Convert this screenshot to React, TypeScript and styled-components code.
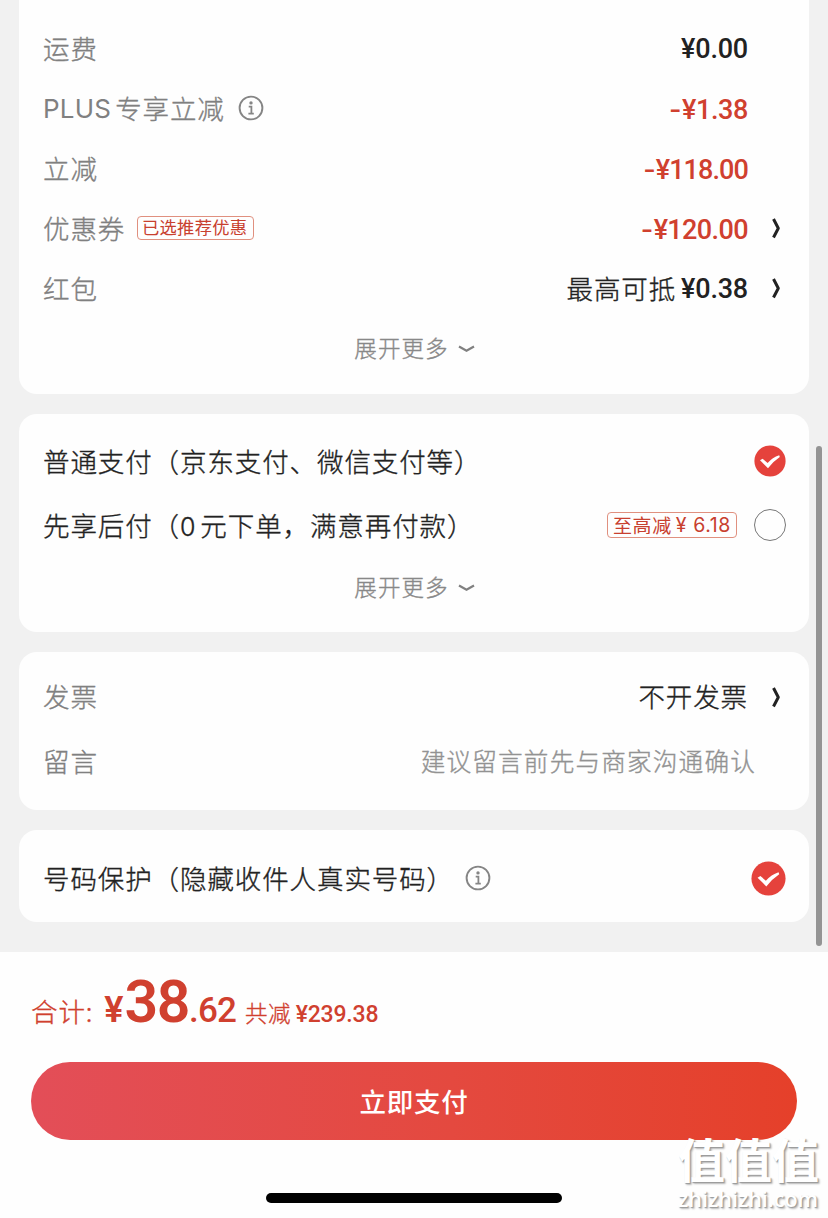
import React from 'react';
import styled, {createGlobalStyle, css} from 'styled-components';

const GlobalStyle = createGlobalStyle`
    * {
        box-sizing: border-box;
    }
    body {
        margin: 0;
        background: #fefefe;
        font-family: "Noto Sans CJK SC", sans-serif;
        font-weight: 300;
        color: #222;
    }
`;

const Page = styled.div`
    position: relative;
    width: 828px;
    height: 1218px;
    overflow: hidden;
    display: flex;
    flex-direction: column;
`;

const Content = styled.main`
    height: 952px;
    padding: 0 19px;
    background: #f1f1f1;
    display: flex;
    flex-direction: column;
    gap: 20px;
`;

const Card = styled.section<{$height: number; $top: number; $flat?: boolean}>`
    height: ${p => p.$height}px;
    padding: ${p => p.$top}px 23px 0 24px;
    background: #fefefe;
    border-radius: ${p => p.$flat ? '0 0 18px 18px' : '18px'};
`;

const Row = styled.div<{$height?: number}>`
    height: ${p => p.$height || 60}px;
    display: flex;
    align-items: center;
    font-size: 26.5px;
    letter-spacing: 0.9px;
    white-space: nowrap;
`;

const Text = styled.span`
    padding-bottom: 2px;
    -webkit-text-stroke: 0.35px currentColor;
`;

const Label = styled.span<{$muted?: boolean}>`
    color: ${p => p.$muted ? '#808080' : '#222'};
    flex: 1;
    display: flex;
    align-items: center;
`;

const Latin = styled.span`
    font-family: Inter, sans-serif;
    font-weight: 400;
    font-size: 26px;
    letter-spacing: 0.2px;
    margin-right: 4px;
`;

const Zero = styled.span`
    font-family: Inter, sans-serif;
    font-size: 25px;
    margin-right: 4px;
`;

const Note = styled(Text)`
    margin-right: 5px;
`;

const Price = styled.span<{$red?: boolean; $spacing?: number}>`
    font-family: Roboto, sans-serif;
    font-weight: 500;
    font-size: 27px;
    letter-spacing: ${p => p.$spacing || -0.2}px;
    padding-top: 2px;
    color: ${p => p.$red ? '#d0402f' : '#222'};
`;

const Minus = styled.span`
    font-family: Inter, sans-serif;
    font-size: 27px;
    margin-right: 1px;
`;

const Arrow = styled.span`
    width: 38px;
    display: flex;
    justify-content: center;
    padding-left: 18px;
`;

const tagBase = css`
    display: inline-flex;
    align-items: center;
    justify-content: center;
    border: 1px solid #e0907f;
    border-radius: 4px;
    color: #c8402f;
    font-weight: 400;
`;

const CouponTag = styled.span`
    ${tagBase};
    width: 117px;
    height: 24px;
    margin-left: 12px;
    padding: 0 2px 3px 0;
    font-size: 17.3px;
    letter-spacing: 0.3px;
`;

const DiscountTag = styled.span`
    ${tagBase};
    width: 130px;
    height: 26px;
    margin-right: 17px;
    padding-bottom: 2px;
    font-size: 19px;
    letter-spacing: 0.6px;
    span {
        font-family: Inter, sans-serif;
        font-size: 19.5px;
        margin-left: 4px;
        padding-top: 2px;
    }
`;

const Hint = styled(Text)`
    font-size: 24.6px;
    letter-spacing: 1.2px;
    color: #929292;
    margin-right: 30px;
    padding-bottom: 3px;
`;

const More = styled.div`
    height: 60px;
    display: flex;
    align-items: center;
    justify-content: center;
    gap: 9px;
    font-size: 22.5px;
    letter-spacing: 1.1px;
    color: #888;
    svg {
        margin-top: 2px;
    }
`;

const Scrollbar = styled.div`
    position: absolute;
    left: 816px;
    top: 446px;
    width: 6px;
    height: 500px;
    border-radius: 3px;
    background: #949494;
`;

const Footer = styled.footer`
    flex: 1;
    display: flex;
    flex-direction: column;
    background: #fefefe;
    padding: 0 31px;
`;

const Total = styled.div`
    height: 110px;
    padding-top: 15px;
    display: flex;
    align-items: baseline;
    color: #d0402f;
    font-size: 26.5px;
    letter-spacing: 0.9px;
    white-space: nowrap;
`;

const Amount = styled.span<{$size: number; $spacing?: number; $left?: number; $bold?: boolean}>`
    font-family: Roboto, sans-serif;
    font-weight: ${p => p.$bold ? 600 : 500};
    font-size: ${p => p.$size}px;
    letter-spacing: ${p => p.$spacing || 0}px;
    margin-left: ${p => p.$left || 0}px;
`;

const Saved = styled(Text)`
    font-size: 22.5px;
    letter-spacing: 0.3px;
    margin-left: 9px;
`;

const PayButton = styled.button`
    height: 78px;
    border: 0;
    border-radius: 39px;
    background: linear-gradient(90deg, #e34e58 0%, #e4493f 55%, #e5402a 100%);
    color: #fff;
    font-family: inherit;
    font-size: 26.5px;
    font-weight: 500;
    letter-spacing: 0.8px;
    padding: 0 0 2px;
`;

const HomeBar = styled.div`
    width: 296px;
    height: 10px;
    margin: 53px auto 0;
    border-radius: 5px;
    background: #000;
`;

const Watermark = styled.div`
    position: absolute;
    left: 678px;
    top: 1135px;
    width: 146px;
    color: #fff;
    white-space: nowrap;
    text-shadow: 1px 1px 1px #999, 2px 2px 2px #bbb;
`;

const WatermarkName = styled.div`
    font-size: 47px;
    font-weight: 700;
    line-height: 46px;
`;

const WatermarkSite = styled.div`
    font-family: "Open Sans", sans-serif;
    font-size: 21.5px;
    font-weight: 600;
    line-height: 22px;
    margin-top: 7px;
`;

const InfoIcon = ({left}: {left: number}) => (
    <svg width={26} height={26} viewBox="0 0 26 26" fill="none" stroke="#858585" style={{marginLeft: left}}>
        <circle cx="13" cy="13" r="11.4" strokeWidth="1.9"/>
        <circle cx="13" cy="7.9" r="1.7" fill="#858585" stroke="none"/>
        <path d="M10.7 11.7h2.7v6.7M10.4 18.6h5.4" strokeWidth="1.8"/>
    </svg>
);

const Chevron = () => (
    <svg width={12} height={22} viewBox="0 0 12 22" fill="none" stroke="#222" strokeWidth="3" strokeLinejoin="round">
        <path d="M3.5 2L8.3 11.3L3.5 20.5"/>
    </svg>
);

const ChevronDown = () => (
    <svg width={17} height={10} viewBox="0 0 17 10" fill="none" stroke="#808080" strokeWidth="2.2">
        <path d="M1 2.5L8.5 6.8L16 2.5"/>
    </svg>
);

const Checked = ({size}: {size: number}) => (
    <svg width={size} height={size} viewBox="0 0 32 32">
        <circle cx="16" cy="16" r="15.6" fill="#e5423c"/>
        <path d="M6 15.2L8.6 13.8L13.6 18Q18.5 12.3 25.2 10.2L25.8 12Q19.4 16.2 14 23.2Z" fill="#fff"/>
    </svg>
);

const Radio = styled.span`
    width: 32px;
    height: 32px;
    border: 1.5px solid #777;
    border-radius: 50%;
`;

const rows = [
    {label: '运费', value: '¥0.00'},
    {label: '专享立减', prefix: 'PLUS', info: true, value: '¥1.38', red: true, spacing: -0.4},
    {label: '立减', value: '¥118.00', red: true, spacing: -0.9},
    {label: '优惠券', tag: '已选推荐优惠', value: '¥120.00', red: true, arrow: true, spacing: -0.6},
    {label: '红包', note: '最高可抵', value: '¥0.38', arrow: true},
];

const App = () => {
    return (
        <>
            <GlobalStyle/>
            <Page>
                <Content>
                    <Card $height={394} $top={18} $flat>
                        {rows.map((row, index) => (
                            <Row key={index}>
                                <Label $muted>
                                    {row.prefix && <Latin>{row.prefix}</Latin>}
                                    <Text>{row.label}</Text>
                                    {row.info && <InfoIcon left={13}/>}
                                    {row.tag && <CouponTag>{row.tag}</CouponTag>}
                                </Label>
                                {row.note && <Note>{row.note}</Note>}
                                <Price $red={row.red} $spacing={row.spacing}>
                                    {row.red && <Minus>-</Minus>}{row.value}
                                </Price>
                                <Arrow>{row.arrow && <Chevron/>}</Arrow>
                            </Row>
                        ))}
                        <More><Text>展开更多</Text><ChevronDown/></More>
                    </Card>
                    <Card $height={218} $top={15}>
                        <Row $height={64}>
                            <Label><Text>普通支付（京东支付、微信支付等）</Text></Label>
                            <Checked size={32}/>
                        </Row>
                        <Row $height={64}>
                            <Label><Text>先享后付（<Zero>0</Zero>元下单，满意再付款）</Text></Label>
                            <DiscountTag>至高减<span>¥ 6.18</span></DiscountTag>
                            <Radio/>
                        </Row>
                        <More><Text>展开更多</Text><ChevronDown/></More>
                    </Card>
                    <Card $height={158} $top={12}>
                        <Row $height={65}>
                            <Label $muted><Text>发票</Text></Label>
                            <Text>不开发票</Text>
                            <Arrow><Chevron/></Arrow>
                        </Row>
                        <Row $height={65}>
                            <Label $muted><Text>留言</Text></Label>
                            <Hint>建议留言前先与商家沟通确认</Hint>
                        </Row>
                    </Card>
                    <Card $height={92} $top={18}>
                        <Row>
                            <Label><Text>号码保护（隐藏收件人真实号码）</Text><InfoIcon left={11}/></Label>
                            <Checked size={35}/>
                        </Row>
                    </Card>
                </Content>
                <Footer>
                    <Total>
                        <Text>合计:</Text>
                        <Amount $size={36} $left={11} $bold>¥</Amount>
                        <Amount $size={59} $spacing={-1.5} $left={1} $bold>38</Amount>
                        <Amount $size={35} $spacing={-0.8}>.62</Amount>
                        <Saved>共减</Saved>
                        <Amount $size={23} $spacing={-0.2} $left={5}>¥239.38</Amount>
                    </Total>
                    <PayButton>立即支付</PayButton>
                    <HomeBar/>
                </Footer>
                <Scrollbar/>
                <Watermark>
                    <WatermarkName>值值值</WatermarkName>
                    <WatermarkSite>zhizhizhi.com</WatermarkSite>
                </Watermark>
            </Page>
        </>
    );
};

export default App;
